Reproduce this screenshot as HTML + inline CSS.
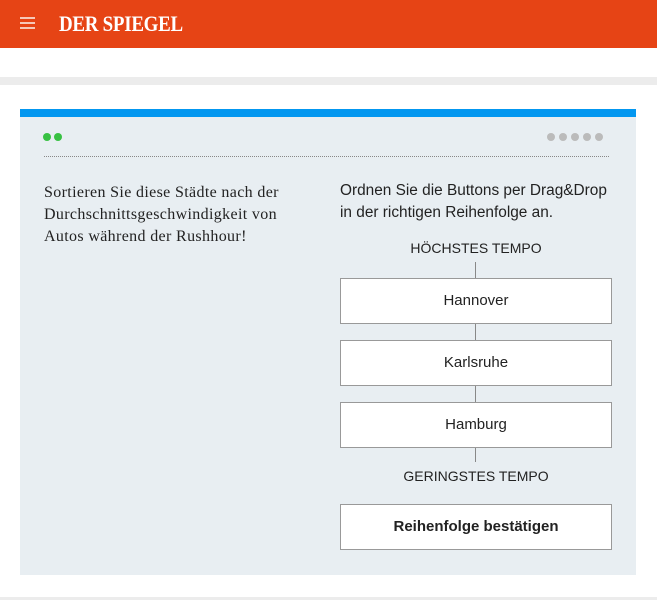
<!DOCTYPE html>
<html><head><meta charset="utf-8"><style>
*{margin:0;padding:0;box-sizing:border-box}
body{width:657px;height:600px;background:#fff;position:relative;overflow:hidden;font-family:"Liberation Sans",sans-serif}
.hd{position:absolute;left:0;top:0;width:657px;height:48px;background:#e64415}
.ham{position:absolute;left:20px;top:17px;width:15px;height:2px;background:#f6c8b8;box-shadow:0 5px 0 #f6c8b8,0 10px 0 #f6c8b8}
.logo{position:absolute;left:59px;top:11px;color:#fff;font-family:"Liberation Serif",serif;font-weight:bold;font-size:22px;letter-spacing:-0.3px;transform:scaleX(0.86);transform-origin:left}
.gl{position:absolute;left:0;top:77px;width:657px;height:8px;background:#ececec}
.card{position:absolute;left:20px;top:109px;width:616px;height:466px;background:#e8eef2;border-top:8px solid #0397f0}
.dot{position:absolute;top:16px;width:8px;height:8px;border-radius:50%}
.g{background:#38c143}.s{background:#bbb}
.dl{position:absolute;left:24px;top:39px;width:565px;border-top:1px dotted #888}
.lt{position:absolute;left:24px;top:65px;font-family:"Liberation Serif",serif;font-size:16px;letter-spacing:0.35px;line-height:22px;color:#222;width:262px}
.rt{position:absolute;left:320px;top:63px;font-size:15.4px;line-height:22px;color:#222}
.lab{position:absolute;left:320px;width:272px;text-align:center;font-size:14px;color:#222}
.vl{position:absolute;left:455px;width:1px;background:#888}
.btn{position:absolute;left:320px;width:272px;height:46px;background:#fff;border:1px solid #999;text-align:center;line-height:44px;font-size:15px;color:#222}
</style></head><body>
<div class="hd"><div class="ham"></div><div class="logo">DER SPIEGEL</div></div>
<div class="gl"></div>
<div class="card">
<div class="dot g" style="left:23px"></div><div class="dot g" style="left:34px"></div>
<div class="dot s" style="left:527px"></div><div class="dot s" style="left:539px"></div><div class="dot s" style="left:551px"></div><div class="dot s" style="left:563px"></div><div class="dot s" style="left:575px"></div>
<div class="dl"></div>
<div class="lt">Sortieren Sie diese Städte nach der Durchschnittsgeschwindigkeit von Autos während der Rushhour!</div>
<div class="rt">Ordnen Sie die Buttons per Drag&amp;Drop<br>in der richtigen Reihenfolge an.</div>
<div class="lab" style="top:123px">HÖCHSTES TEMPO</div>
<div class="vl" style="top:145px;height:200px"></div>
<div class="btn" style="top:161px">Hannover</div>
<div class="btn" style="top:223px">Karlsruhe</div>
<div class="btn" style="top:285px">Hamburg</div>
<div class="lab" style="top:351px">GERINGSTES TEMPO</div>
<div class="btn" style="top:387px;font-weight:bold">Reihenfolge bestätigen</div>
</div>
<div style="position:absolute;left:0;top:597px;width:657px;height:3px;background:#ececec"></div>
</body></html>
